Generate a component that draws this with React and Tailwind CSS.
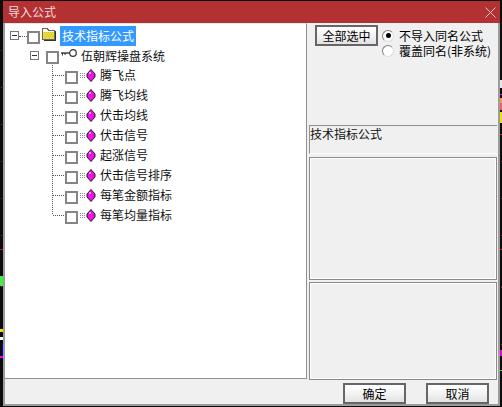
import React from 'react'

const children = ['腾飞点', '腾飞均线', '伏击均线', '伏击信号', '起涨信号', '伏击信号排序', '每笔金额指标', '每笔均量指标']

const leftMarks = [
  [50, 1, 1, 1, '#a02030'], [87, 1, 1, 1, '#a02030'], [124, 1, 1, 1, '#a02030'], [161, 1, 1, 1, '#a02030'],
  [198, 1, 1, 1, '#a02030'], [235, 1, 1, 1, '#a02030'], [249, 0, 3, 1, '#b02030'], [276, 0, 3, 10, '#40f040'],
  [286, 1, 1, 1, '#c02030'], [329, 0, 3, 3, '#f0e000'], [337, 0, 3, 3, '#ffffff'], [344, 2, 1, 12, '#0000e0'],
  [356, 0, 3, 2, '#f000f0'],
]

const rightMarks = [
  [80, 0, 2, 8, '#e8e8e8'], [94, 0, 2, 1, '#f000f0'], [98, 0, 2, 5, '#f0a040'], [103, 0, 2, 7, '#f06070'],
  [112, 0, 2, 11, '#f0e000'], [134, 0, 2, 1, '#e02030'], [161, 1, 1, 1, '#a02030'], [198, 1, 1, 1, '#a02030'],
  [235, 1, 1, 1, '#a02030'], [249, 0, 2, 1, '#c02030'], [287, 1, 1, 1, '#a02030'], [344, 1, 1, 1, '#a02030'],
  [350, 0, 2, 6, '#f000f0'], [370, 0, 2, 1, '#30e030'],
]

const Strip = ({ marks, className }) => (
  <div className={`absolute top-0 h-full ${className}`}>
    {marks.map(([top, left, width, height, color], i) => (
      <div key={i} className="absolute" style={{ top, left, width, height, backgroundColor: color }} />
    ))}
  </div>
)

const Check = () => <div className="w-[13px] h-[13px] mt-[4px] border-2 border-[#858585] bg-white shrink-0" />

const Expander = () => (
  <svg width="9" height="9" viewBox="0 0 9 9" className="shrink-0">
    <rect x="0.5" y="0.5" width="8" height="8" fill="#fff" stroke="#777" />
    <path d="M2 4.5h5" stroke="#333" />
  </svg>
)

const Folder = () => (
  <svg width="15" height="14" viewBox="0 0 15 14" className="shrink-0" shapeRendering="crispEdges">
    <path d="M1.5 12.5V1.500h5l1 2h6v9z" fill="#fffbe0" stroke="#666" />
    <path d="M2 5h11v7H2z" fill="#f2e020" />
    <path d="M3 5h1v1H3zM5 5h1v1H5zM7 5h1v1H7zM9 5h1v1H9zM11 5h1v1h-1zM4 7h1v1H4zM6 7h1v1H6zM8 7h1v1H8zM10 7h1v1h-1zM3 9h1v1H3zM5 9h1v1H5zM7 9h1v1H7zM9 9h1v1H9zM11 9h1v1h-1zM4 11h1v1H4zM8 11h1v1H8z" fill="#b8b8a0" />
    <path d="M14.500 4v9.500H3" fill="none" stroke="#333" />
  </svg>
)

const Key = () => (
  <svg width="16" height="10" viewBox="0 0 16 10" className="shrink-0 mb-[5px]">
    <path d="M0 5h9" stroke="#222" strokeWidth="1.300" fill="none" />
    <path d="M1.500 5v2.500M4 5v2" stroke="#333" fill="none" />
    <circle cx="12" cy="5" r="3.300" fill="#fff" stroke="#333" strokeWidth="1.200" />
  </svg>
)

const Formula = () => (
  <svg width="16" height="13" viewBox="0 0 16 13" className="shrink-0">
    <path d="M0 4.500h6M0 6.500h6M0 8.500h6" stroke="#888" strokeDasharray="1 1" />
    <path d="M11 0.500l4 4.500v3l-4 4.500L7 8V5z" fill="#f010e8" stroke="#1c1c1c" />
    <path d="M9 3h2v2H9z" fill="#ff90f0" />
  </svg>
)

// dotted tree connector for one child row
const Connector = ({ last }) => (
  <svg width="13" height="20" viewBox="0 0 13 20" className="shrink-0">
    <path d={last ? 'M0.500 0V10' : 'M0.500 0V20'} stroke="#555" strokeDasharray="1 1" fill="none" />
    <path d="M1 10.500H13" stroke="#555" strokeDasharray="1 1" fill="none" />
  </svg>
)

const Radio = ({ checked }) => (
  <div className="w-[12px] h-[12px] rounded-full border border-t-[#808080] border-l-[#808080] border-r-[#dcdcdc] border-b-[#dcdcdc] bg-white flex items-center justify-center shrink-0">
    {checked && <div className="w-[5px] h-[5px] rounded-full bg-black" />}
  </div>
)

const Button = ({ children }) => (
  <button className="h-[21px] w-[63px] shrink-0 border-2 border-[#666] bg-gradient-to-b from-white via-[#f3f3f3] to-[#e2e2e2] text-xs text-black leading-none">
    {children}
  </button>
)

export default function App() {
  return (
    <div className="relative w-[502px] h-[407px] bg-[#0c0c0c] overflow-hidden pt-px pl-[3px] font-['Noto_Sans_CJK_SC',sans-serif] text-xs">
      <Strip marks={leftMarks} className="left-0 w-[3px]" />
      <Strip marks={rightMarks} className="right-0 w-[2px]" />

      <div className="w-[497px] h-[405px] flex flex-col bg-[#f0f0f0] border-x-2 border-b-2 border-[#9c9c9c]">
        <div className="h-[22px] -mx-[2px] bg-[#b33033] flex items-center justify-between pl-[5px] pr-[4px] shrink-0">
          <span className="text-[#f3dede]">导入公式</span>
          <svg width="11" height="11" viewBox="0 0 11 11">
            <path d="M0.500 0.500l10 10M10.500 0.500l-10 10" stroke="#f0c8c8" />
          </svg>
        </div>

        <div className="flex h-[356px] shrink-0">
          <div className="w-[302px] bg-white border-r border-b border-[#8f8f8f] border-t border-t-[#e8e8e8] pl-[5px] pt-px shrink-0">
            <div className="flex items-center h-[21px]">
              <Expander />
              <span className="w-[8px] h-px mt-px border-t border-dotted border-[#555]" />
              <Check />
              <span className="ml-px mb-[3px]"><Folder /></span>
              <span className="ml-[4px] h-[20px] w-[76px] bg-[#3399ff] text-white flex items-center justify-center">技术指标公式</span>
            </div>
            <div className="flex items-center h-[19px] pl-[20px]">
              <Expander />
              <span className="w-[7px] h-px" />
              <Check />
              <span className="ml-[2px]"><Key /></span>
              <span className="ml-[4px] text-[#111]">伍朝辉操盘系统</span>
            </div>
            <div className="pl-[42px]">
              {children.map((name, i) => (
                <div key={name} className="flex items-center h-5">
                  <Connector last={i === children.length - 1} />
                  <Check />
                  <span className="ml-[2px]"><Formula /></span>
                  <span className="ml-[4px] text-[#111]">{name}</span>
                </div>
              ))}
            </div>
          </div>

          <div className="flex-1 flex flex-col pl-[2px] pr-[1px]">
            <div className="h-[102px] shrink-0 flex items-start pt-[2px] pl-[6px] gap-[4px]">
              <Button>全部选中</Button>
              <div className="flex flex-col pt-[3px]">
                <label className="flex items-center gap-[5px] h-[15px] leading-[15px]"><Radio checked />不导入同名公式</label>
                <label className="flex items-center gap-[5px] h-[15px] leading-[15px]">
                  <Radio />
                  覆盖同名(非系统)
                </label>
              </div>
            </div>
            <div className="h-[29px] border-t border-l border-[#8f8f8f] border-b border-b-white shrink-0 text-[#111]">技术指标公式</div>
            <div className="h-[123px] mt-[3px] border border-[#8a8a8a] shadow-[inset_1px_1px_0_#fff,inset_-1px_-1px_0_#fff] shrink-0" />
            <div className="h-[98px] mt-[2px] border border-[#8a8a8a] shadow-[inset_1px_1px_0_#fff,inset_-1px_-1px_0_#fff] shrink-0" />
          </div>
        </div>

        <div className="flex-1 flex items-start justify-end gap-[20px] pr-[9px] pt-[4px]">
          <Button>确定</Button>
          <Button>取消</Button>
        </div>
      </div>
    </div>
  )
}
